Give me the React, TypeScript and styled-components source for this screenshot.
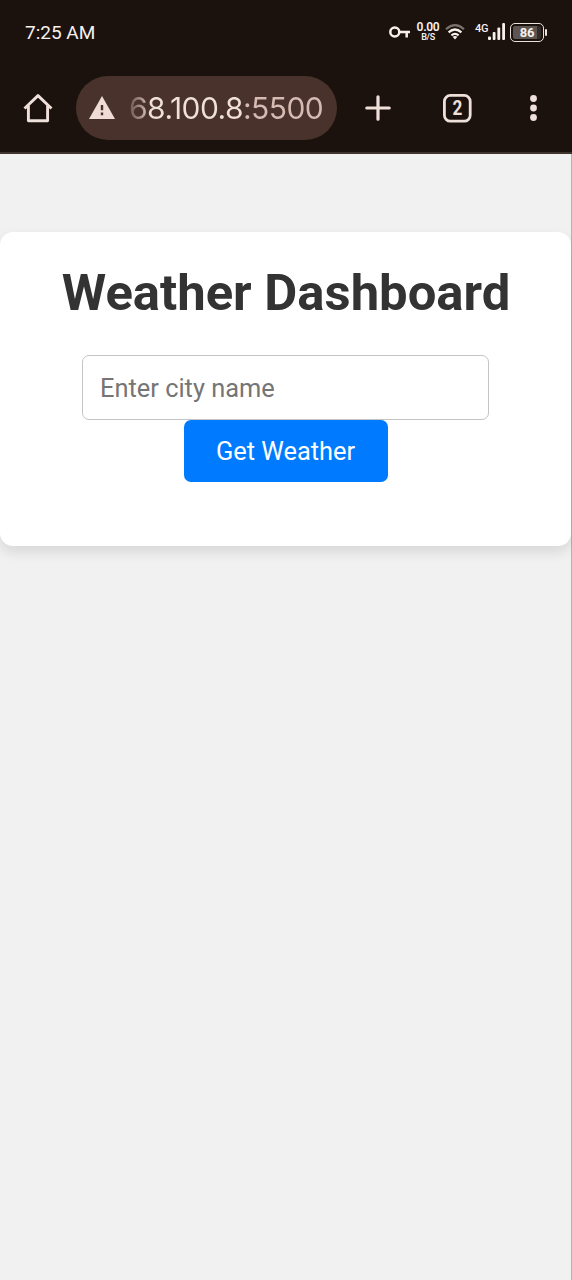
import React from 'react';
import styled, { createGlobalStyle } from 'styled-components';

const GlobalStyle = createGlobalStyle`
  * { box-sizing: border-box; }
  body { margin: 0; background: #f1f1f1; font-family: Roboto, sans-serif; }
`;

const Screen = styled.div`
  display: flex;
  flex-direction: column;
  width: 572px;
  height: 1280px;
  overflow: hidden;
`;

const StatusBar = styled.header`
  display: flex;
  align-items: center;
  height: 63px;
  padding: 1px 25px 0 25px;
  background: #1b120e;
  color: #f7f1ee;
`;

const Clock = styled.time`
  flex: 1;
  padding-top: 2px;
  font-size: 19px;
  line-height: 24px;
`;

const StatusIcon = styled.svg<{ $gap: number }>`
  display: block;
  flex: none;
  margin-left: ${(p) => p.$gap}px;
`;

const Speed = styled.div`
  display: flex;
  flex-direction: column;
  align-items: center;
  width: 24px;
  margin: 0 0 2px 6px;
  font-size: 12px;
  font-weight: 600;
  letter-spacing: -0.3px;
  line-height: 11px;
  white-space: nowrap;
`;

const SpeedUnit = styled.span`
  font-size: 9px;
  line-height: 8px;
`;

const Network = styled.span`
  align-self: flex-start;
  margin: 21px 0 0 10px;
  width: 13px;
  font-size: 11px;
  font-weight: 500;
  letter-spacing: -0.2px;
  line-height: 13px;
  white-space: nowrap;
`;

const Battery = styled.div`
  display: flex;
  align-items: center;
  margin-left: 4px;
`;

const BatteryBody = styled.div`
  width: 34px;
  height: 19px;
  padding: 2px;
  border: 1.5px solid #e8e1de;
  border-radius: 5px;
`;

const BatteryLevel = styled.div`
  height: 100%;
  border-radius: 2px;
  background: linear-gradient(90deg, #5c5552 84%, #352c28 84%);
  font-size: 13px;
  font-weight: 700;
  letter-spacing: -0.3px;
  line-height: 14px;
  text-align: center;
`;

const BatteryTip = styled.div`
  width: 2px;
  height: 7px;
  margin-left: 1px;
  border-radius: 1px;
  background: #e8e1de;
`;

const BrowserBar = styled.nav`
  display: flex;
  align-items: center;
  height: 91px;
  padding: 1px 0 0 22px;
  border-bottom: 2px solid #40342f;
  background: #1b120e;
  color: #f0e0da;
`;

const IconButton = styled.button<{ $gap?: number }>`
  display: flex;
  flex: none;
  width: 32px;
  height: 32px;
  margin: 0 0 0 ${(p) => p.$gap ?? 0}px;
  padding: 0;
  border: 0;
  background: none;
  color: inherit;
`;

const AddressBar = styled.div`
  display: flex;
  align-items: center;
  width: 261px;
  height: 64px;
  margin-left: 22px;
  padding-left: 13px;
  border-radius: 32px;
  background: #49322b;
`;

const Address = styled.span`
  margin-left: 14px;
  background: linear-gradient(90deg, #6d564f 0, #b8a49d 15px, #f0e0da 18px, #f0e0da 113px, #d5bbb2 113px);
  background-clip: text;
  color: transparent;
  font-family: Inter, sans-serif;
  font-size: 30px;
  font-weight: 400;
  letter-spacing: -0.55px;
  line-height: 38px;
  white-space: nowrap;
`;

const Page = styled.main`
  flex: 1;
  padding-top: 78px;
  border-right: 1px solid #b4b4b4;
  background: #f1f1f1;
`;

const Card = styled.section`
  display: flex;
  flex-direction: column;
  align-items: center;
  height: 314px;
  padding-top: 31px;
  border-radius: 13px;
  background: #fff;
  box-shadow: 0 6px 13px rgba(0, 0, 0, 0.11);
`;

const Title = styled.h1`
  margin: 0 0 32px;
  padding-left: 1px;
  color: #333;
  font-size: 50.8px;
  font-weight: 700;
  line-height: 60px;
  white-space: nowrap;
`;

const CityInput = styled.input`
  width: 407px;
  height: 65px;
  padding: 0 17px;
  border: 1.5px solid #c4c4c4;
  border-radius: 7px;
  background: #fff;
  font-family: inherit;
  font-size: 25.4px;
  outline: 0;
  &::placeholder { color: #757575; opacity: 1; }
`;

const SubmitButton = styled.button`
  width: 204px;
  height: 62px;
  padding: 0;
  border: 0;
  border-radius: 7px;
  background: #007bff;
  color: #fff;
  font-family: inherit;
  font-size: 25.4px;
`;

export default function App() {
  return (
    <Screen>
      <GlobalStyle />
      <StatusBar>
        <Clock>7:25 AM</Clock>
        <StatusIcon $gap={0} width="22" height="14" viewBox="0 0 22 14" fill="none" stroke="currentColor" strokeWidth="2.5">
          <circle cx="6.8" cy="7" r="4.5" />
          <path d="M11.3 7H22M18.7 7v5.5" />
        </StatusIcon>
        <Speed>
          0.00
          <SpeedUnit>B/S</SpeedUnit>
        </Speed>
        <StatusIcon $gap={5} width="20" height="16" viewBox="0 0 20 16" fill="none" stroke="currentColor" strokeWidth="2.2">
          <path d="M1 5.2Q10-2.8 19 5.2" stroke="#7b726e" />
          <path d="M3.6 8.4Q10 2.6 16.4 8.4M6.4 11.4Q10 8.3 13.6 11.4" />
          <path d="M7.6 12.8Q10 11 12.4 12.8L10 15.5Z" fill="currentColor" stroke="none" />
        </StatusIcon>
        <Network>4G</Network>
        <StatusIcon $gap={0} width="18" height="18" viewBox="0 0 18 18" fill="currentColor">
          <rect x="0" y="13.5" width="3" height="3.5" rx="1" />
          <rect x="4.7" y="9" width="2.8" height="8" rx="1" />
          <rect x="9.4" y="4.5" width="2.8" height="12.5" rx="1" />
          <rect x="14.2" y="0" width="2.8" height="17" rx="1" />
        </StatusIcon>
        <Battery>
          <BatteryBody>
            <BatteryLevel>86</BatteryLevel>
          </BatteryBody>
          <BatteryTip />
        </Battery>
      </StatusBar>
      <BrowserBar>
        <IconButton aria-label="Home">
          <svg width="32" height="32" viewBox="0 0 32 32" fill="none" stroke="currentColor" strokeWidth="2.9" strokeLinejoin="round">
            <path d="M2.5 16.5 16 3.6l13.5 12.9" />
            <path d="M6.4 13.5v15.2h19.2V13.5" />
          </svg>
        </IconButton>
        <AddressBar>
          <svg width="26" height="24" viewBox="0 0 26 24">
            <path d="M13 0 26 23H0Z" fill="#f0dcd7" />
            <path d="M11.8 9h2.4v5.3h-2.4zM11.8 16.6h2.4v2.6h-2.4z" fill="#49322b" />
          </svg>
          <Address>68.100.8:5500</Address>
        </AddressBar>
        <IconButton $gap={25} aria-label="New tab">
          <svg width="32" height="32" viewBox="0 0 32 32" fill="none" stroke="currentColor" strokeWidth="3.2" strokeLinecap="round">
            <path d="M4.8 16h22.4M16 4.8v22.4" />
          </svg>
        </IconButton>
        <IconButton $gap={47} aria-label="Tabs">
          <svg width="32" height="32" viewBox="0 0 32 32">
            <rect x="3.4" y="3.4" width="25.8" height="25.8" rx="6" fill="none" stroke="currentColor" strokeWidth="2.8" />
            <text transform="translate(16.3 23) scale(.88 1)" textAnchor="middle" fill="currentColor" fontFamily="Roboto" fontWeight="700" fontSize="19.5">2</text>
          </svg>
        </IconButton>
        <IconButton $gap={45} aria-label="Menu">
          <svg width="32" height="32" viewBox="0 0 32 32" fill="currentColor">
            <circle cx="15.5" cy="6.5" r="3.4" />
            <circle cx="15.5" cy="16" r="3.4" />
            <circle cx="15.5" cy="25.5" r="3.4" />
          </svg>
        </IconButton>
      </BrowserBar>
      <Page>
        <Card>
          <Title>Weather Dashboard</Title>
          <CityInput placeholder="Enter city name" />
          <SubmitButton>Get Weather</SubmitButton>
        </Card>
      </Page>
    </Screen>
  );
}
